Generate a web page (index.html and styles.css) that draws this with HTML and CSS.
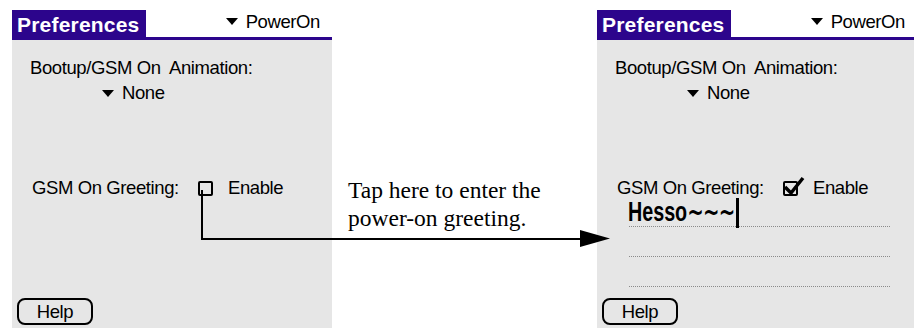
FILE: index.html
```html
<!DOCTYPE html>
<html>
<head>
<meta charset="utf-8">
<link rel="stylesheet" href="styles.css">
</head>
<body>
<div class="page">
  <div class="screen">
    <div class="titlebar">
      <div class="tab">Preferences</div>
      <div class="popup head-popup"><span class="tri"></span>PowerOn</div>
    </div>
    <div class="content">
      <div class="anim">Bootup/GSM On&nbsp; Animation:</div>
      <div class="popup none-popup"><span class="tri"></span>None</div>
      <div class="greet-row">
        <span class="greet-label">GSM On Greeting:</span>
        <span class="checkbox"></span>
        <span class="enable">Enable</span>
      </div>
    </div>
    <div class="help">Help</div>
  </div>

  <div class="caption">Tap here to enter the<br>power-on greeting.</div>

  <div class="screen">
    <div class="titlebar">
      <div class="tab">Preferences</div>
      <div class="popup head-popup"><span class="tri"></span>PowerOn</div>
    </div>
    <div class="content">
      <div class="anim">Bootup/GSM On&nbsp; Animation:</div>
      <div class="popup none-popup"><span class="tri"></span>None</div>
      <div class="greet-row">
        <span class="greet-label">GSM On Greeting:</span>
        <span class="checkbox checked">
          <svg class="check" viewBox="0 0 24 22" width="24" height="22"><path d="M3 11 L9 17 L21 2" fill="none" stroke="#000" stroke-width="3.5" stroke-linejoin="miter"/></svg>
        </span>
        <span class="enable">Enable</span>
      </div>
      <div class="field">
        <div class="field-line"><span class="greeting">Hesso<span class="tildes">~~~</span></span><span class="cursor"></span></div>
        <div class="field-line"></div>
        <div class="field-line"></div>
      </div>
    </div>
    <div class="help">Help</div>
  </div>

  <svg class="arrow" width="914" height="329" viewBox="0 0 914 329">
    <path d="M202 190 V239 H582" fill="none" stroke="#000" stroke-width="2"/>
    <polygon points="580,230 610,238.5 580,247" fill="#000"/>
  </svg>
</div>
</body>
</html>
```

FILE: styles.css
```css
* { box-sizing: border-box; margin: 0; padding: 0; }
html, body { width: 914px; height: 329px; overflow: hidden; background: #fff; }
body { font-family: "Liberation Sans", Arial, sans-serif; color: #000; }

.page {
  position: relative;
  display: flex;
  align-items: flex-start;
  padding: 10px 0 0 12px;
  height: 329px;
}

.screen {
  flex: 0 0 320px;
  width: 320px;
  height: 318px;
  background: #e6e6e6;
  display: flex;
  flex-direction: column;
  font-size: 18.5px;
  letter-spacing: -0.4px;
}

.titlebar {
  flex: 0 0 30px;
  display: flex;
  background: #fff;
  border-bottom: 3px solid #2c058c;
}

.tab {
  width: 134px;
  background: #2c058c;
  color: #fff;
  font-weight: bold;
  font-size: 21px;
  letter-spacing: 0.2px;
  padding: 2px 0 0 5px;
  line-height: 25px;
}

.popup { display: flex; align-items: center; }
.tri {
  flex: 0 0 auto;
  width: 0; height: 0;
  border-left: 6px solid transparent;
  border-right: 6px solid transparent;
  border-top: 7px solid #000;
  margin-right: 8px;
}
.head-popup { margin-left: auto; padding-right: 12px; line-height: 23px; align-self: flex-start; }

.content { flex: 1; display: flex; flex-direction: column; align-items: flex-start; }
.anim { margin: 17px 0 0 18px; line-height: 22px; }
.none-popup { margin: 3px 0 0 90px; line-height: 22px; }

.greet-row { display: flex; align-items: flex-start; margin: 73px 0 0 20px; line-height: 22px; }
.greet-label { flex: 0 0 166px; width: 166px; }
.checkbox {
  flex: 0 0 15px;
  position: relative;
  width: 15px; height: 15px;
  border: 2px solid #000;
  border-radius: 2px;
  margin-top: 4px;
}
.check { position: absolute; left: -3px; top: -7px; }
.enable { margin-left: 15px; }

.field { margin: -2px 0 0 32px; width: 261px; }
.field-line { height: 30px; border-bottom: 1px dotted #8a8a8a; line-height: 30px; white-space: nowrap; }
.greeting {
  display: inline-block;
  font-family: "Liberation Sans", Arial, sans-serif;
  font-weight: bold;
  font-size: 27px;
  letter-spacing: 0;
  transform: scaleX(0.73);
  transform-origin: 0 50%;
  margin-left: -1px;
  width: 80px;
}
.tildes { font-family: "DejaVu Sans", sans-serif; letter-spacing: -1px; }
.cursor {
  display: inline-block;
  width: 3px;
  height: 30px;
  background: #000;
  vertical-align: -7px;
  margin-left: 28px;
}

.help {
  align-self: flex-start;
  margin: 0 0 3px 5px;
  width: 76px;
  height: 27px;
  border: 2px solid #000;
  border-radius: 8px;
  text-align: center;
  line-height: 23px;
}

.caption {
  flex: 0 0 265px;
  width: 265px;
  padding: 166px 0 0 16px;
  font-family: "Liberation Serif", "Times New Roman", serif;
  font-size: 23.5px;
  line-height: 28px;
}

.arrow { position: absolute; left: 0; top: 0; pointer-events: none; }
```
